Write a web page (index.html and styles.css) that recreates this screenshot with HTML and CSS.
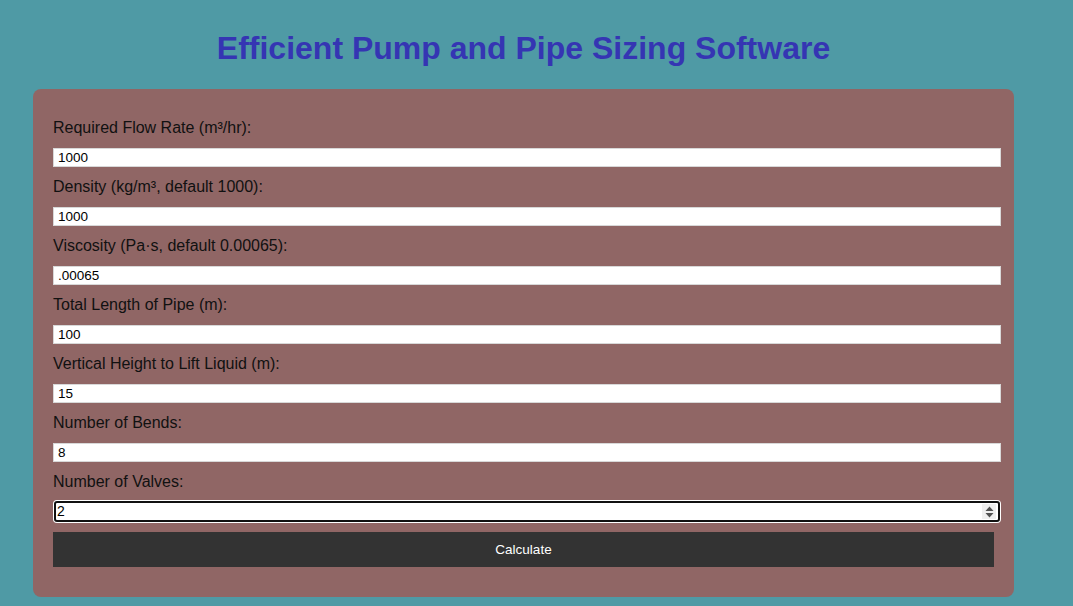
FILE: index.html
```html
<!DOCTYPE html>
<html lang="en">
<head>
<meta charset="utf-8">
<title>Efficient Pump and Pipe Sizing Software</title>
<link rel="stylesheet" href="styles.css">
</head>
<body>
<main class="page">
  <h1 class="title">Efficient Pump and Pipe Sizing Software</h1>
  <form class="card">
    <label class="field-label" for="flow">Required Flow Rate (m³/hr):</label>
    <input class="field" id="flow" type="text" value="1000">
    <label class="field-label" for="density">Density (kg/m³, default 1000):</label>
    <input class="field" id="density" type="text" value="1000">
    <label class="field-label" for="visc">Viscosity (Pa·s, default 0.00065):</label>
    <input class="field" id="visc" type="text" value=".00065">
    <label class="field-label" for="length">Total Length of Pipe (m):</label>
    <input class="field" id="length" type="text" value="100">
    <label class="field-label" for="height">Vertical Height to Lift Liquid (m):</label>
    <input class="field" id="height" type="text" value="15">
    <label class="field-label" for="bends">Number of Bends:</label>
    <input class="field" id="bends" type="text" value="8">
    <label class="field-label" for="valves">Number of Valves:</label>
    <div class="field field-focus">
      <span class="field-value">2</span>
      <span class="spin">
        <svg width="9" height="12" viewBox="0 0 9 12"><path d="M4.5 0.5 L8.5 5 L0.5 5 Z" fill="#505050"/><path d="M0.5 7 L8.5 7 L4.5 11.5 Z" fill="#505050"/></svg>
      </span>
    </div>
    <button class="btn" type="button">Calculate</button>
  </form>
</main>
</body>
</html>
```

FILE: styles.css
```css
html, body {
  background: #4f9aa5;
}
body {
  margin: 8px;
  font-family: "Liberation Sans", Arial, sans-serif;
}
.page {
  margin-left: 25px;
  width: 981px;
}
.title {
  margin: 22px 0 22px;
  text-align: center;
  font-size: 32px;
  line-height: 37px;
  font-weight: bold;
  color: #3535b3;
}
.card {
  background: #906665;
  border-radius: 8px;
  padding: 19px 20px 20px;
  display: flex;
  flex-direction: column;
  align-items: stretch;
}
.field-label {
  display: block;
  margin: 11px 0 11px;
  font-size: 16px;
  line-height: 18px;
  color: #111;
}
.field {
  box-sizing: border-box;
  width: 948px;
  height: 19px;
  margin: 0;
  padding: 1px 4px;
  border: 1px solid #d8d8d8;
  background: #fff;
  font-family: "Liberation Sans", Arial, sans-serif;
  font-size: 13.5px;
  line-height: 15px;
  color: #000;
  outline: none;
}
.field-focus {
  display: flex;
  align-items: center;
  justify-content: space-between;
  width: 946px;
  height: 21px;
  margin: -1px 0 -1px 1px;
  padding: 0 2px 0 1px;
  border: 2px solid #111;
  box-shadow: 0 0 0 1px #fff;
  border-radius: 3px;
  font-size: 14px;
}
.spin {
  display: flex;
  align-items: center;
  justify-content: center;
  width: 14px;
  height: 15px;
  background: #efefef;
}
.spin svg {
  display: block;
}
.btn {
  margin: 11px 0 10px;
  width: 941px;
  height: 35px;
  border: none;
  background: #333;
  color: #fff;
  font-family: "Liberation Sans", Arial, sans-serif;
  font-size: 13.5px;
  cursor: pointer;
}
```
